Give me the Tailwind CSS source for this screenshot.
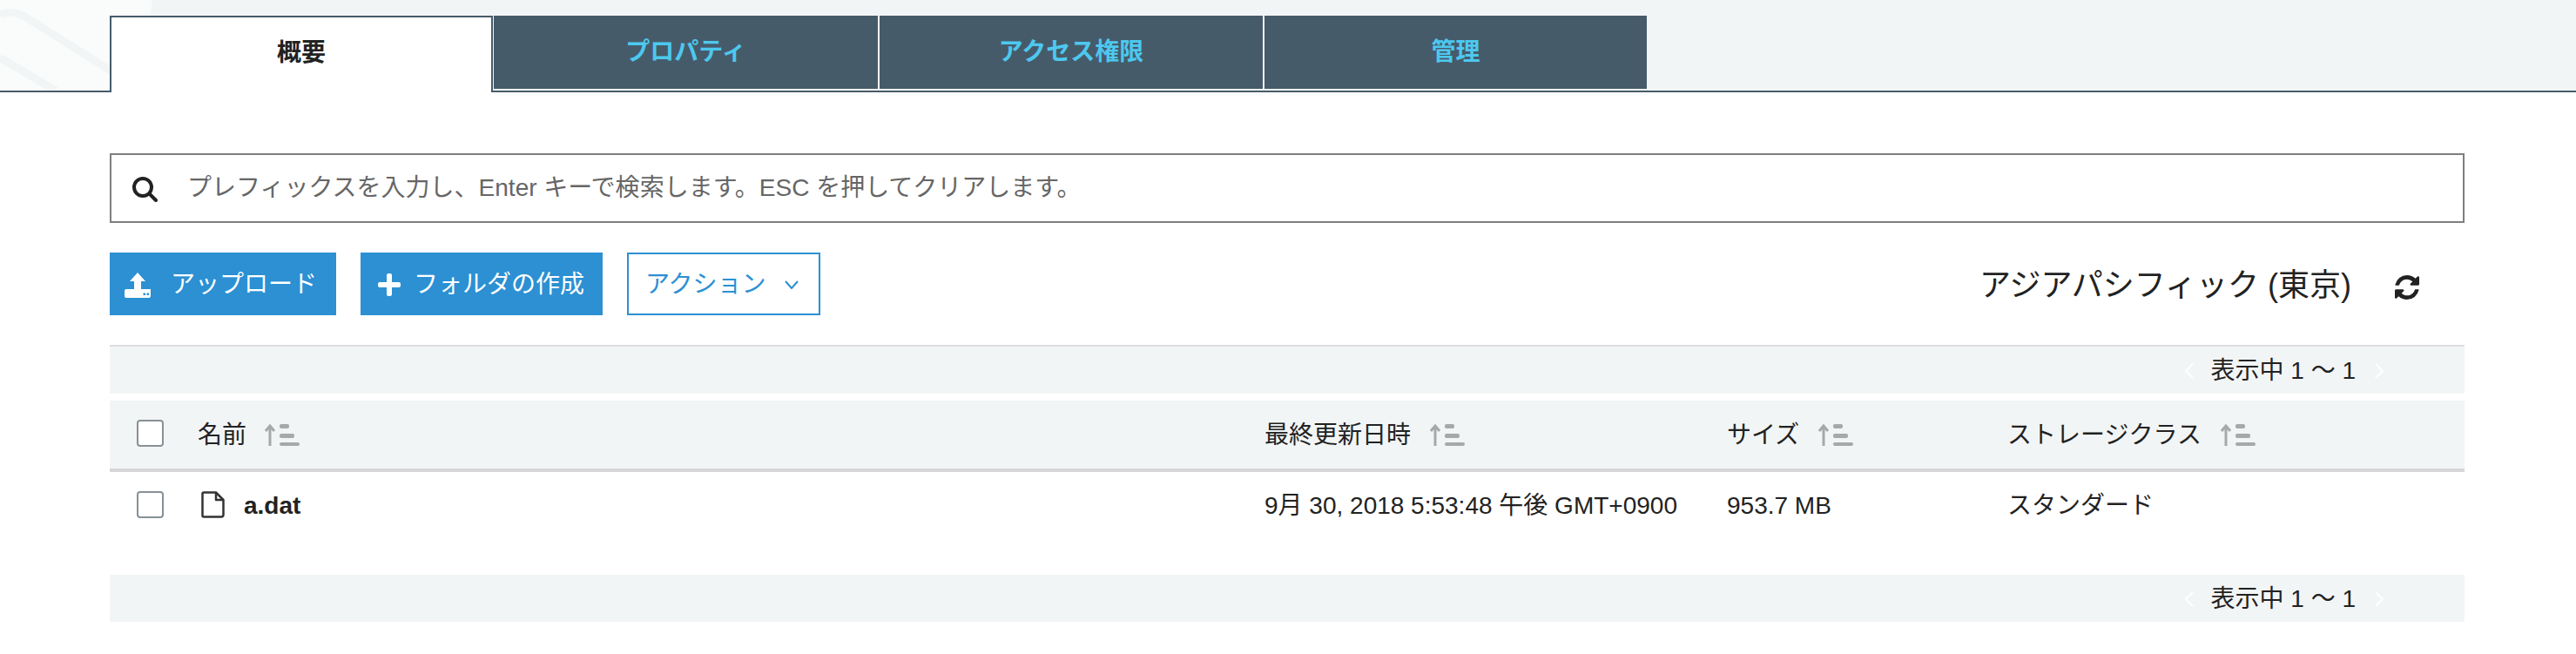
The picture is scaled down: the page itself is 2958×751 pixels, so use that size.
<!DOCTYPE html>
<html lang="ja">
<head>
    <meta charset="UTF-8">
    <title>S3</title>
    <script src="https://cdn.jsdelivr.net/npm/@tailwindcss/browser@4"></script>
</head>
<body class="bg-white font-['Liberation_Sans','Noto_Sans_CJK_JP',sans-serif] text-[28px] text-[#222]">
    <!-- Tabs -->
    <div class="relative h-[106px] bg-[#f2f5f6] border-b-2 border-[#465b6a]">
        <svg class="absolute left-0 top-0" width="180" height="104" viewBox="0 0 180 104">
            <path d="M0 0 H175 L160 104 H0 Z" fill="#fafbfb"/>
            <path d="M0 17 Q14 11 30 20 L130 83" fill="none" stroke="#f2f5f6" stroke-width="9"/>
            <path d="M0 66 L64 104" fill="none" stroke="#f2f5f6" stroke-width="9"/>
        </svg>
        <div class="relative flex items-start pl-[126px] pt-[18px]">
            <div class="w-[440px] h-[88px] pb-[4px] bg-white border-2 border-b-0 border-[#465b6a] flex items-center justify-center font-bold text-[#222]">概要</div>
            <div class="ml-[1px] w-[441px] h-[84px] bg-[#465b6a] flex items-center justify-center font-bold text-[#4dc8ef]">プロパティ</div>
            <div class="ml-[2px] w-[440px] h-[84px] bg-[#465b6a] flex items-center justify-center font-bold text-[#4dc8ef]">アクセス権限</div>
            <div class="ml-[2px] w-[439px] h-[84px] bg-[#465b6a] flex items-center justify-center font-bold text-[#4dc8ef]">管理</div>
        </div>
    </div>

    <div class="pl-[126px] pr-[128px]">
        <!-- Search -->
        <div class="mt-[70px] h-[80px] border-2 border-[#7f7f7f] flex items-center pl-[24px]">
            <svg class="mt-[3px]" width="29" height="29" viewBox="0 0 29 29" fill="none" stroke="#222" stroke-width="4" stroke-linecap="round">
                <circle cx="12" cy="12" r="10"/>
                <path d="M20 20 L27 27"/>
            </svg>
            <span class="ml-[34px] text-[#666]">プレフィックスを入力し、Enter キーで検索します。ESC を押してクリアします。</span>
        </div>

        <!-- Toolbar -->
        <div class="mt-[34px] h-[72px] flex items-center">
            <button class="h-[72px] w-[260px] pt-[2px] bg-[#2c90d3] text-white flex items-center pl-[17px]">
                <svg width="30" height="29" viewBox="0 0 30 29" fill="#fff">
                    <path d="M15 0 L24 10 H19 V20 H11 V10 H6 Z"/>
                    <path fill-rule="evenodd" d="M2 19 H30 V27 Q30 29 28 29 H2 Q0 29 0 27 V21 Q0 19 2 19 Z M21.5 23.5 h2.5 v2.5 h-2.5 Z M25.5 23.5 h2.5 v2.5 h-2.5 Z"/>
                </svg>
                <span class="ml-[23px]">アップロード</span>
            </button>
            <button class="ml-[28px] h-[72px] w-[278px] pt-[2px] bg-[#2c90d3] text-white flex items-center pl-[20px]">
                <svg width="26" height="26" viewBox="0 0 26 26" fill="#fff">
                    <path d="M10 2 Q10 0 12 0 H14 Q16 0 16 2 V10 H24 Q26 10 26 12 V14 Q26 16 24 16 H16 V24 Q16 26 14 26 H12 Q10 26 10 24 V16 H2 Q0 16 0 14 V12 Q0 10 2 10 H10 Z"/>
                </svg>
                <span class="ml-[15px]">フォルダの作成</span>
            </button>
            <button class="ml-[28px] h-[72px] w-[222px] pt-[2px] bg-white border-2 border-[#2c90d3] text-[#2c90d3] flex items-center pl-[19px]">
                <span>アクション</span>
                <svg class="ml-[21px]" width="16" height="10" viewBox="0 0 16 10" fill="none" stroke="#2c90d3" stroke-width="2"><path d="M1 1 L8 9 L15 1"/></svg>
            </button>
            <div class="ml-auto mt-[4px] text-[36px] text-[#222] mr-[50px]">アジアパシフィック (東京)</div>
            <svg class="mr-[52px] mt-[8px]" width="28" height="28" viewBox="128 128 1536 1536" fill="#222">
                <path d="M1639 1056q0 5-1 7-64 268-268 434.5t-478 166.5q-146 0-282.5-55t-243.5-157l-129 129q-19 19-45 19t-45-19-19-45v-448q0-26 19-45t45-19h448q26 0 45 19t19 45-19 45l-137 137q71 66 161 102t187 36q134 0 250-65t186-179q11-17 53-117 8-23 30-23h192q13 0 22.5 9.5t9.5 22.5zm25-800v448q0 26-19 45t-45 19h-448q-26 0-45-19t-19-45 19-45l138-138q-148-137-349-137-134 0-250 65t-186 179q-11 17-53 117-8 23-30 23h-199q-13 0-22.5-9.5t-9.5-22.5v-7q65-268 270-434.5t480-166.5q146 0 284 55.5t245 156.5l130-129q19-19 45-19t45 19 19 45z"/>
            </svg>
        </div>

        <!-- Pager top -->
        <div class="mt-[34px] h-[56px] pt-[2px] bg-[#f2f5f6] border-t-2 border-[#dedede] flex items-center justify-end pr-[93px]">
            <svg width="13" height="18" viewBox="0 0 13 18" fill="none" stroke="#fff" stroke-width="2"><path d="M11 1 L3 9 L11 17"/></svg>
            <span class="ml-[19px] mr-[22px]">表示中 1 〜 1</span>
            <svg width="10" height="18" viewBox="0 0 10 18" fill="none" stroke="#fff" stroke-width="2"><path d="M1 1 L9 9 L1 17"/></svg>
        </div>

        <!-- Table header -->
        <div class="mt-[8px] h-[82px] bg-[#f2f5f6] border-b-4 border-[#d6d6d6] grid grid-cols-[1326px_531px_322px_1fr] items-center">
            <div class="flex items-center pl-[31px]">
                <span class="-mt-[3px] w-[31px] h-[31px] rounded-[4px] bg-white border-2 border-[#879196]"></span>
                <span class="ml-[39px] mt-[2px]">名前</span>
                <svg class="ml-[21px]" width="40" height="25" viewBox="0 0 40 25" fill="#a6a8aa">
                    <path d="M6 25 V2 M1 8 L6 2 L11 8" fill="none" stroke="#a6a8aa" stroke-width="3"/>
                    <rect x="17" y="0" width="11" height="5" rx="2"/>
                    <rect x="17" y="11" width="17" height="5" rx="2"/>
                    <rect x="17" y="21" width="23" height="4" rx="2"/>
                </svg>
            </div>
            <div class="flex items-center">
                <span class="mt-[2px]">最終更新日時</span>
                <svg class="ml-[22px]" width="40" height="25" viewBox="0 0 40 25" fill="#a6a8aa">
                    <path d="M6 25 V2 M1 8 L6 2 L11 8" fill="none" stroke="#a6a8aa" stroke-width="3"/>
                    <rect x="17" y="0" width="11" height="5" rx="2"/>
                    <rect x="17" y="11" width="17" height="5" rx="2"/>
                    <rect x="17" y="21" width="23" height="4" rx="2"/>
                </svg>
            </div>
            <div class="flex items-center">
                <span class="mt-[2px]">サイズ</span>
                <svg class="ml-[22px]" width="40" height="25" viewBox="0 0 40 25" fill="#a6a8aa">
                    <path d="M6 25 V2 M1 8 L6 2 L11 8" fill="none" stroke="#a6a8aa" stroke-width="3"/>
                    <rect x="17" y="0" width="11" height="5" rx="2"/>
                    <rect x="17" y="11" width="17" height="5" rx="2"/>
                    <rect x="17" y="21" width="23" height="4" rx="2"/>
                </svg>
            </div>
            <div class="flex items-center">
                <span class="mt-[2px]">ストレージクラス</span>
                <svg class="ml-[22px]" width="40" height="25" viewBox="0 0 40 25" fill="#a6a8aa">
                    <path d="M6 25 V2 M1 8 L6 2 L11 8" fill="none" stroke="#a6a8aa" stroke-width="3"/>
                    <rect x="17" y="0" width="11" height="5" rx="2"/>
                    <rect x="17" y="11" width="17" height="5" rx="2"/>
                    <rect x="17" y="21" width="23" height="4" rx="2"/>
                </svg>
            </div>
        </div>

        <!-- Row -->
        <div class="h-[118px] pt-[22px] grid grid-cols-[1326px_531px_322px_1fr]">
            <div class="flex items-start pl-[31px]">
                <span class="w-[31px] h-[31px] rounded-[4px] bg-white border-2 border-[#879196]"></span>
                <svg class="ml-[43px]" width="27" height="31" viewBox="0 0 27 31" fill="none" stroke="#333" stroke-width="2.5" stroke-linejoin="round">
                    <path d="M3 1.5 H17 L25.5 10 V27 Q25.5 29.5 23 29.5 H3 Q1.5 29.5 1.5 28 V3 Q1.5 1.5 3 1.5 Z"/>
                    <path d="M17 1.5 V10 H25.5"/>
                </svg>
                <span class="ml-[22px] font-bold leading-[34px]">a.dat</span>
            </div>
            <div class="leading-[34px]">9月 30, 2018 5:53:48 午後 GMT+0900</div>
            <div class="leading-[34px]">953.7 MB</div>
            <div class="leading-[34px]">スタンダード</div>
        </div>

        <!-- Pager bottom -->
        <div class="h-[54px] pt-[2px] bg-[#f2f5f6] flex items-center justify-end pr-[93px]">
            <svg width="13" height="18" viewBox="0 0 13 18" fill="none" stroke="#fff" stroke-width="2"><path d="M11 1 L3 9 L11 17"/></svg>
            <span class="ml-[19px] mr-[22px]">表示中 1 〜 1</span>
            <svg width="10" height="18" viewBox="0 0 10 18" fill="none" stroke="#fff" stroke-width="2"><path d="M1 1 L9 9 L1 17"/></svg>
        </div>
    </div>
</body>
</html>
